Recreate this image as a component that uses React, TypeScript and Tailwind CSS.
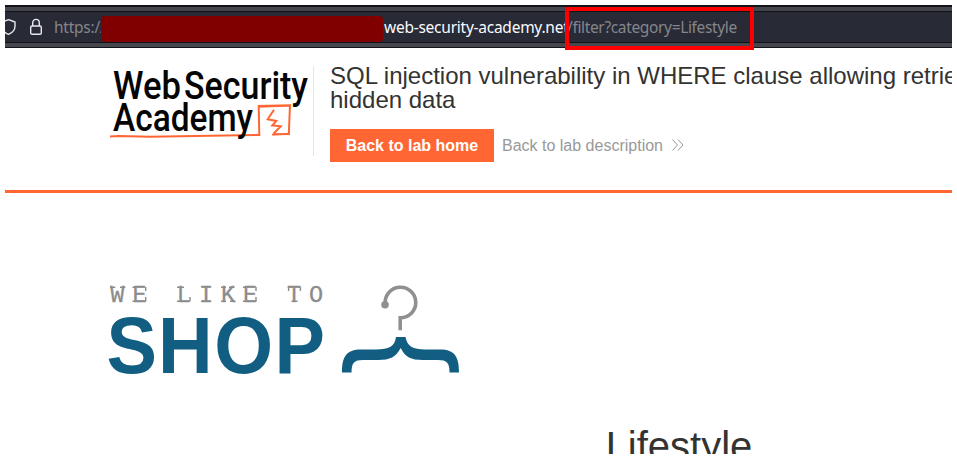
function AddressBar() {
  return (
    <div className="relative h-[43px] border-t-2 border-b border-[#14151a] bg-[#46474e] py-1">
      <div className="flex h-8 items-center overflow-hidden border-y border-[#111217] bg-[#282a36] font-['Noto_Sans',sans-serif] text-[15.5px] leading-5 tracking-[-0.25px] whitespace-nowrap">
        <svg className="h-5 w-[11px] shrink-0" viewBox="0 0 11 20" fill="none" stroke="#e8e8ec" strokeWidth="1.4" strokeLinejoin="round">
          <path d="M-3 5L3.5 2.7L10 5V9C10 13 7 16 3.5 17.3C0 16-3 13-3 9Z" />
        </svg>
        <svg className="ml-3.5 h-5 w-3 shrink-0" viewBox="0 0 12 20" fill="none" stroke="#e8e8ec" strokeWidth="1.4">
          <rect x=".7" y="9" width="10.6" height="8.2" rx="1.3" />
          <path d="M2.7 9V5.9C2.7 3.8 4 2.4 6 2.4S9.3 3.8 9.3 5.9V9" />
        </svg>
        <span className="ml-3 w-[47px] shrink-0 text-[#85868b]">https://</span>
        <span className="z-10 mt-1 h-[26px] w-[282px] shrink-0 rounded bg-[#800000]" />
        <span className="ml-px w-[183px] shrink-0 text-[#fbfbfe]">web-security-academy.net</span>
        <span className="tracking-[-0.35px] text-[#85868b]">/filter?category=Lifestyle</span>
      </div>
      <div className="absolute top-0 left-[560px] h-[43px] w-[189px] border-4 border-[#ff0000]" />
    </div>
  );
}

function AcademyLogo() {
  return (
    <svg className="h-[90px] w-[208px] shrink-0" viewBox="105 66 208 90" fill="none">
      <path d="M110 136.6L119 136L150 136.8L241 135.2L259.3 135L258.7 106L290 105.3L288.8 134L273 134.2" stroke="#ff6633" strokeWidth="2" />
      <path d="M258 107L291 105.8M272 134.8L290 133.6" stroke="#ff6633" strokeWidth="1.6" />
      <path d="M274 109.8L267.7 119.3L276.3 121L272.3 125.5L280.7 126.3L273.3 134" stroke="#ff6633" strokeWidth="2" />
      <g fill="#050505" fontFamily="Roboto, sans-serif" fontSize="38.2" fontWeight="500">
        <text x="113" y="98.5" textLength="68" lengthAdjust="spacingAndGlyphs">Web</text>
        <text x="184" y="98.5" textLength="124" lengthAdjust="spacingAndGlyphs">Security</text>
        <text x="113" y="131" textLength="140" lengthAdjust="spacingAndGlyphs">Academy</text>
      </g>
    </svg>
  );
}

function ShopLogo() {
  return (
    <svg className="h-[100px] w-[360px]" viewBox="105 281 360 100" fill="none">
      <text y="302" x="110.2 132.4 154.6 176.8 199.1 221 243 264 287 309" fill="#8c8c8c" stroke="#8c8c8c" strokeWidth=".3" fontFamily="Liberation Mono, monospace" fontSize="23.5">WE LIKE TO</text>
      <path d="M110 287.2H115.3M120 287.2H125.3M132.5 287.2H137M132.5 301.2H137M145.7 287V291M145.7 297V301.5M177 287.2H184M177 301.2H181M190 297V301.5M221 287.2H226M229 287.2H234.5M221 301.2H226M230 301.2H235.5M243 287.2H247M243 301.2H247M256 287V291M256 297V301.5M288.6 287V291M300.4 287V291M291.5 301.2H297.5" stroke="#8c8c8c" strokeWidth="1.4" />
      <text transform="scale(.94 1)" y="372.7" x="113.3 168 228 292" fill="#115e82" fontFamily="Liberation Sans, Arial, sans-serif" fontSize="80.5" fontWeight="700">SHOP</text>
      <path d="M385.3 304.5A15.3 15.3 0 1 1 400.2 317.8V330.3" stroke="#8e9092" strokeWidth="3.6" />
      <circle cx="385" cy="304.7" r="3.8" fill="#8e9092" />
      <path d="M342 372.5C342 357 346 349.5 361 349.5H376C389 349.5 395 346 396 337H405.5C407 346 413 349.5 425 349.5H440C455 349.5 459 357 459 372.5H449.5C449.5 363 447 360 438 360H423C411 360 405 357 400.7 348C396 357 390 360 378 360H363C354 360 351.5 363 351.5 372.5Z" fill="#115e82" />
    </svg>
  );
}

export default function App() {
  return (
    <div className="h-[459px] w-[957px] overflow-hidden bg-white p-[5px] font-['Liberation_Sans',Arial,sans-serif] text-[#333332]">
      <div className="h-[449px] w-[947px] overflow-hidden">
        <AddressBar />
        <header className="flex h-[145px] border-b-[3px] border-[#ff6633] pt-[18px] pl-[100px]">
          <AcademyLogo />
          <div className="h-[90px] w-px shrink-0 bg-[#e5e5e5]" />
          <div className="-mt-0.5 ml-4 w-[700px] shrink-0">
            <h1 className="text-2xl leading-6 whitespace-nowrap">SQL injection vulnerability in WHERE clause allowing retrieval of<br />hidden data</h1>
            <div className="mt-[17px] flex items-center">
              <button className="h-[33px] w-[164px] bg-[#ff6633] text-base leading-[33px] font-bold text-white">Back to lab home</button>
              <a className="ml-2 text-base text-[#999999]">Back to lab description</a>
              <svg className="-mt-px ml-[9px] h-3 w-3" viewBox="0 0 12 12" fill="none" stroke="#999999">
                <path d="M.5.5L5.5 6L.5 11.5M6 .5L11 6L6 11.5" />
              </svg>
            </div>
          </div>
        </header>
        <main>
          <div className="pt-[88px] pl-[100px]"><ShopLogo /></div>
          <h2 className="mt-[42px] ml-[401px] text-center text-[40px] leading-[46px]">Lifestyle</h2>
        </main>
      </div>
    </div>
  );
}
